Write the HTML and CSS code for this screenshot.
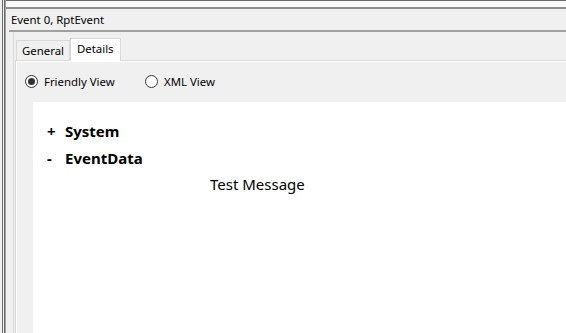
FILE: index.html
```html
<!DOCTYPE html>
<html lang="en">
<head>
  <meta charset="UTF-8">
  <title>Event Properties</title>
  <link rel="stylesheet" href="styles.css">
</head>
<body>
  <div class="frame">
    <div class="pane">
      <div class="top-strip"></div>
      <div class="header">Event 0, RptEvent</div>
      <div class="content">
        <div class="tabs">
          <div class="tab">General</div>
          <div class="tab selected">Details</div>
        </div>
        <div class="tab-panel">
          <div class="view-options">
            <label class="radio"><span class="circle checked"></span>Friendly View</label>
            <label class="radio"><span class="circle"></span>XML View</label>
          </div>
          <div class="view-box">
            <div class="node"><span class="toggle">+</span>System</div>
            <div class="node"><span class="toggle">-</span>EventData</div>
            <div class="data">Test Message</div>
          </div>
        </div>
      </div>
    </div>
  </div>
</body>
</html>
```

FILE: styles.css
```css
html, body {
  height: 100%;
}
body {
  margin: 0;
  background: #f0f0f0;
  font-family: "Noto Sans", sans-serif;
  font-size: 11.4px;
  color: #000;
  overflow: hidden;
}
.frame {
  height: 100%;
  margin-left: 2px;
  border-left: 3px double #6a6a6a;
}
.pane {
  height: 100%;
  display: flex;
  flex-direction: column;
  border-left: 1px solid #a0a0a0;
}
.top-strip {
  height: 6px;
  border-top: 1px solid #6a6a6a;
  border-bottom: 2px solid #8e8e8e;
  background: #fafafa;
}
.header {
  height: 21px;
  line-height: 21px;
  margin-left: 3px;
  padding-left: 2px;
  border-bottom: 2px solid #a0a0a0;
}
.content {
  flex: 1;
  display: flex;
  flex-direction: column;
  margin-left: 7px;
  border-left: 1px solid #dadada;
  padding-left: 1px;
}
.tabs {
  display: flex;
  align-items: flex-end;
  height: 28px;
  padding-left: 1px;
}
.tab {
  height: 19px;
  line-height: 20px;
  padding: 0 5px;
  border: 1px solid #d9d9d9;
  border-bottom: none;
  background: #f0f0f0;
}
.tab.selected {
  height: 22px;
  line-height: 19px;
  margin-bottom: -1px;
  padding: 0 6px;
  background: #fff;
  position: relative;
  z-index: 1;
}
.tab-panel {
  flex: 1;
  display: flex;
  flex-direction: column;
  border-top: 1px solid #d9d9d9;
  border-left: 1px solid #d9d9d9;
  box-shadow: inset 1px 1px 0 #fff;
  padding-left: 17px;
}
.view-options {
  display: flex;
  align-items: center;
  height: 40px;
  margin-left: -8px;
}
.radio {
  display: flex;
  align-items: center;
  gap: 6px;
  width: 120px;
}
.circle {
  width: 11px;
  height: 11px;
  border: 1px solid #333;
  border-radius: 50%;
  background: #fff;
  display: flex;
  align-items: center;
  justify-content: center;
}
.circle.checked::after {
  content: "";
  width: 7px;
  height: 7px;
  border-radius: 50%;
  background: #333;
}
.view-box {
  flex: 1;
  margin-top: 1px;
  background: #fff;
  padding: 16px 0 0 14px;
  font-size: 15px;
  line-height: 27px;
}
.node {
  font-weight: bold;
}
.toggle {
  display: inline-block;
  width: 18px;
}
.data {
  padding-left: 163px;
  line-height: 25px;
}
```
